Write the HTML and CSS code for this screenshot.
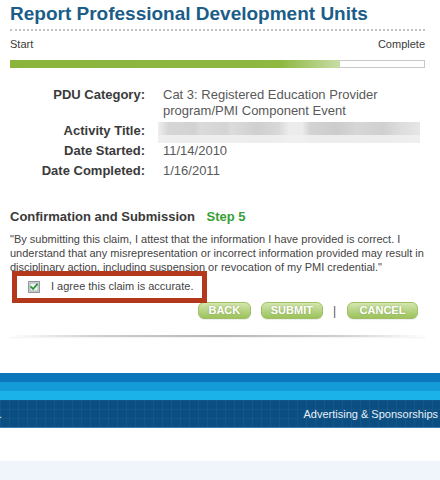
FILE: index.html
```html
<!DOCTYPE html>
<html lang="en">
<head>
<meta charset="utf-8">
<title>Report Professional Development Units</title>
<link rel="stylesheet" href="styles.css">
</head>
<body>
<main class="page">
  <h1 class="title">Report Professional Development Units</h1>
  <div class="dots"></div>

  <div class="progress-labels">
    <span>Start</span>
    <span>Complete</span>
  </div>
  <div class="progress"><div class="progress-fill" style="width:80%"></div></div>

  <dl class="details">
    <dt>PDU Category:</dt>
    <dd>Cat 3: Registered Education Provider program/PMI Component Event</dd>
    <dt>Activity Title:</dt>
    <dd><div class="redacted"></div></dd>
    <dt>Date Started:</dt>
    <dd>11/14/2010</dd>
    <dt>Date Completed:</dt>
    <dd>1/16/2011</dd>
  </dl>

  <section class="confirm">
    <h2 class="confirm-title">Confirmation and Submission <span class="step">Step 5</span></h2>
    <p class="attest">"By submitting this claim, I attest that the information I have provided is correct. I understand that any misrepresentation or incorrect information provided may result in disciplinary action, including suspension or revocation of my PMI credential."</p>
    <label class="agree">
      <svg class="checkbox" width="12" height="12" viewBox="0 0 12 12">
        <rect x="0.5" y="0.5" width="11" height="11" fill="#dfe3e7" stroke="#3a3a3a" stroke-dasharray="1 1"/>
        <rect x="2" y="2" width="8" height="8" fill="#f2f4f5" stroke="#8c949c" stroke-width="0.7"/>
        <path d="M3.2 6.1 L5.1 8 L8.9 3.6" fill="none" stroke="#22962c" stroke-width="1.8" stroke-linecap="square"/>
      </svg>
      <span>I agree this claim is accurate.</span>
    </label>
    <div class="actions">
      <button class="btn btn-back" type="button">BACK</button>
      <button class="btn btn-submit" type="button">SUBMIT</button>
      <span class="sep">|</span>
      <button class="btn btn-cancel" type="button">CANCEL</button>
    </div>
    <div class="highlight"></div>
  </section>

  <div class="rule"></div>
</main>

<footer class="site-footer">
  <div class="stripe stripe-1"></div>
  <div class="stripe stripe-2"></div>
  <div class="stripe stripe-3"></div>
  <div class="footer-bar">
    <span class="footer-dot">.</span>
    <a class="footer-link" href="#">Advertising &amp; Sponsorships</a>
  </div>
</footer>
<div class="bottom-band"></div>
</body>
</html>
```

FILE: styles.css
```css
* { box-sizing: border-box; }

html, body {
  margin: 0;
  padding: 0;
  background: #fff;
  font-family: "Liberation Sans", Arial, sans-serif;
  color: #333;
}

.page {
  padding: 0 15px 0 10px;
}

.title {
  margin: 0;
  padding-top: 3px;
  font-size: 19px;
  line-height: 22px;
  font-weight: bold;
  color: #1b5d89;
  white-space: nowrap;
}

.dots {
  margin-top: 4px;
  border-top: 2px dotted #c2c2c2;
}

.progress-labels {
  display: flex;
  justify-content: space-between;
  margin-top: 6px;
  font-size: 11px;
  line-height: 14px;
  color: #3a3a3a;
}

.progress {
  margin-top: 9px;
  height: 8px;
  border: 1px solid #c9c9c9;
  background: #fff;
}

.progress-fill {
  margin-top: -1px;
  margin-left: -1px;
  height: 8px;
  background: linear-gradient(to right, #8ab43a 0%, #8fb841 82%, #c8dda6 100%);
}

.details {
  display: grid;
  grid-template-columns: 135px 1fr;
  column-gap: 18px;
  row-gap: 4px;
  margin: 19px 0 0;
  font-size: 13px;
  line-height: 16px;
}

.details dt {
  text-align: right;
  font-weight: bold;
  color: #3a3a3a;
}

.details dd {
  margin: 0;
  color: #595959;
  padding-right: 40px;
}

.redacted {
  height: 21px;
  margin: -1px -40px -4px -5px;
  width: 262px;
  background:
    linear-gradient(to bottom, transparent 0, transparent 62%, rgba(240, 240, 240, 0.9) 62%),
    linear-gradient(to right,
      #eeeeee 0, #d6d6d6 4%, #d2d2d2 14%, #dadada 16%, #d4d4d4 26%, #dcdcdc 28%,
      #cfcfcf 38%, #d8d8d8 46%, #ececec 50%, #ececec 55%, #d3d3d3 58%, #cccccc 68%,
      #d6d6d6 76%, #d0d0d0 86%, #dcdcdc 92%, #e6e6e6 100%);
  filter: blur(0.6px);
}

.confirm {
  position: relative;
  margin-top: 30px;
}

.confirm-title {
  margin: 0;
  font-size: 13px;
  line-height: 16px;
  font-weight: bold;
  color: #3a3a3a;
}

.step {
  margin-left: 8px;
  color: #36a034;
}

.attest {
  margin: 7px 0 0;
  font-size: 11px;
  line-height: 14px;
  color: #444;
}

.agree {
  display: flex;
  align-items: center;
  gap: 11px;
  margin-top: 5px;
  padding-left: 18px;
  height: 14px;
  font-size: 11px;
  line-height: 14px;
  color: #444;
}

.checkbox {
  flex: none;
  margin-top: 1px;
}

.actions {
  display: flex;
  justify-content: flex-end;
  align-items: center;
  gap: 10px;
  margin-top: 9px;
  padding-right: 7px;
}

.btn {
  height: 17px;
  padding: 0;
  border: 1px solid #a0c066;
  border-radius: 6px;
  background: linear-gradient(to bottom, #d4e7ae 0%, #b9d588 45%, #9cc25a 100%);
  color: #fff;
  font-family: "Liberation Sans", Arial, sans-serif;
  font-size: 11px;
  font-weight: bold;
  line-height: 15px;
  text-shadow: 0 0 2px rgba(90, 120, 40, 0.5);
  box-shadow: 0 1px 1px rgba(0, 0, 0, 0.08);
}

.btn-back { width: 53px; }
.btn-submit { width: 62px; }
.btn-cancel { width: 71px; margin-left: 1px; }

.sep {
  font-size: 12px;
  line-height: 14px;
  color: #555;
}

.highlight {
  position: absolute;
  top: 62px;
  left: 2px;
  width: 195px;
  height: 32px;
  border: 5px solid #b4391c;
  pointer-events: none;
}

.rule {
  margin-top: 16px;
  height: 2px;
  background: linear-gradient(to right, rgba(190,190,190,0) 0%, #d0d0d0 20%, #b8b8b8 50%, #d0d0d0 80%, rgba(190,190,190,0) 100%);
  box-shadow: 0 1px 2px rgba(0, 0, 0, 0.06);
}

.site-footer {
  margin-top: 36px;
}

.stripe { height: 9px; }
.stripe-1 { background: #0b76bc; }
.stripe-2 { background: #139bd8; }
.stripe-3 { background: #1bb2ea; }

.footer-bar {
  display: flex;
  justify-content: space-between;
  height: 28px;
  padding: 7px 2px 0 0;
  background-color: #0b4f82;
  background-image:
    repeating-linear-gradient(to right, rgba(255,255,255,0.04) 0, rgba(255,255,255,0.04) 1px, transparent 1px, transparent 9px),
    repeating-linear-gradient(to bottom, rgba(255,255,255,0.03) 0, rgba(255,255,255,0.03) 1px, transparent 1px, transparent 9px);
  border-bottom: 1px solid #3f7db0;
  font-size: 11px;
  line-height: 14px;
}

.footer-dot {
  color: #dfe9f3;
  margin-left: -1px;
}

.footer-link {
  color: #e9f0f7;
  text-decoration: none;
}

.bottom-band {
  margin-top: 33px;
  height: 19px;
  background: #eff5fa;
}
```
